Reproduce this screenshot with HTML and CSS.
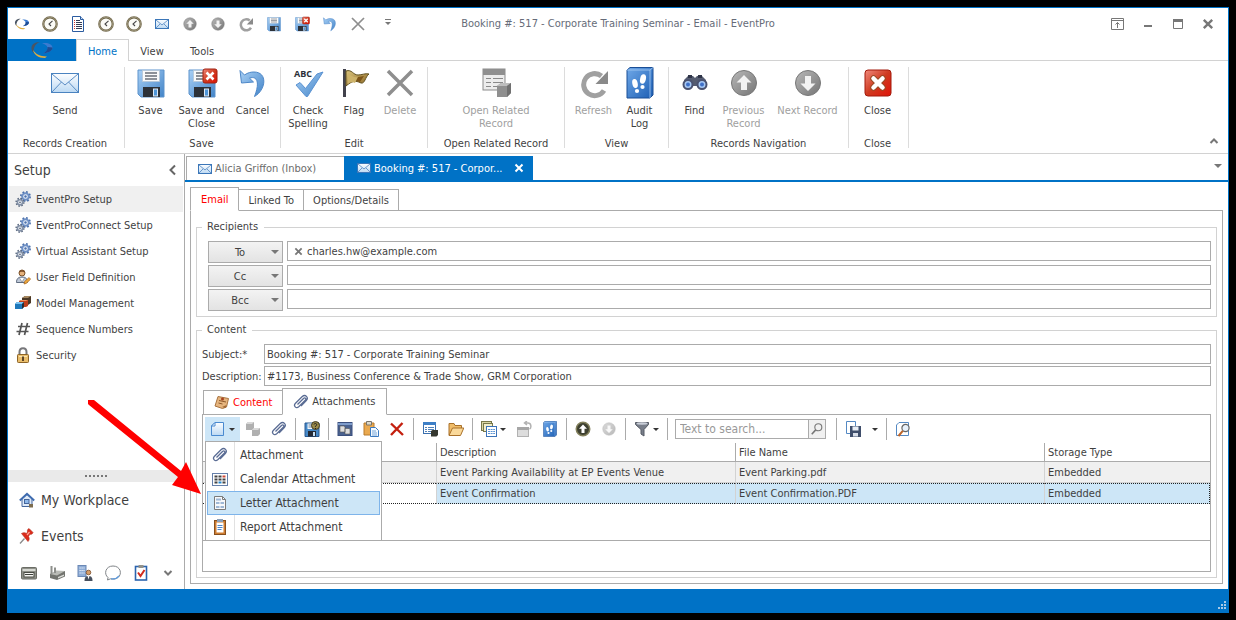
FILE: index.html
```html
<!DOCTYPE html>
<html lang="en">
<head>
    <meta charset="UTF-8">
    <title>Booking #: 517 - Corporate Training Seminar - Email - EventPro</title>
    <link rel="stylesheet" href="styles.css">
</head>
<body>
    <!-- shared icons -->
    <svg class="sprite" aria-hidden="true">
        <defs>
            <linearGradient id="gBlue" x1="0" y1="0" x2="1" y2="1"><stop offset="0" stop-color="#a9d0f5"/><stop offset="1" stop-color="#4284c8"/></linearGradient>
            <linearGradient id="gPale" x1="0" y1="0" x2="0" y2="1"><stop offset="0" stop-color="#fdfeff"/><stop offset="1" stop-color="#bcd9f3"/></linearGradient>
            <linearGradient id="gBook" x1="0" y1="0" x2="1" y2="1"><stop offset="0" stop-color="#6fa8e8"/><stop offset="1" stop-color="#1d5fb4"/></linearGradient>
            <linearGradient id="gGray" x1="0" y1="0" x2="1" y2="1"><stop offset="0" stop-color="#b8b8b8"/><stop offset="1" stop-color="#757575"/></linearGradient>
            <linearGradient id="gRed" x1="0" y1="0" x2="1" y2="1"><stop offset="0" stop-color="#f08a7c"/><stop offset=".5" stop-color="#cf3a20"/><stop offset="1" stop-color="#e01408"/></linearGradient>
            <linearGradient id="gGold" x1="0" y1="0" x2="1" y2="1"><stop offset="0" stop-color="#d9c47e"/><stop offset="1" stop-color="#8a6420"/></linearGradient>
        </defs>
        <symbol id="swirl" viewBox="0 0 24 18">
            <path d="M10 1C4 1 1 4 1.500 8c.3 1.600 1 3 2.300 4.200C3 7 5 3 10 1z" fill="#4a5563"/>
            <path d="M3 9c1 4.500 5 8 12 8l2-1.600C10 15.500 6 13.500 3 9z" fill="#dfae3f"/>
            <path d="M12 2.500c5-1.200 10 .5 10.500 4C22.800 10 18 12 13 12.500c3-1.500 5-3.500 4.500-6C17 4.500 15 3 12 2.500z" fill="#3c7bd0"/>
            <path d="M17.500 6l5 .5c.3 3.500-4.500 5.500-9.500 6 3-1.500 4.800-3.500 4.500-6.500z" fill="#1e4c94"/>
        </symbol>
        <symbol id="clock" viewBox="0 0 16 16">
            <circle cx="8" cy="8" r="6.700" fill="#fbfbf6" stroke="#6d6448" stroke-width="2.200"/>
            <circle cx="8" cy="8" r="6.800" fill="none" stroke="#b9b095" stroke-width=".6"/>
            <path d="M10.500 4.800L7 8l2 2" fill="none" stroke="#444" stroke-width="1.100"/>
        </symbol>
        <symbol id="doc" viewBox="0 0 16 16">
            <path d="M2.500.5h8l3 3v12h-11z" fill="#fff" stroke="#2b5ca0"/>
            <path d="M10.500.5v3h3" fill="#c8dcf4" stroke="#2b5ca0"/>
            <path d="M6 4.500h4M6 6.500h6M6 8.500h6M6 10.500h6M6 12.500h6" stroke="#333c55"/>
            <path d="M4 4.500h1M4 6.500h1M4 8.500h1M4 10.500h1M4 12.500h1" stroke="#c33"/>
        </symbol>
        <symbol id="mail" viewBox="0 0 16 16">
            <rect x="1.500" y="3.500" width="13" height="9" fill="url(#gPale)" stroke="#3b76b8"/>
            <path d="M2 4l6 5 6-5M2 12l4-4M14 12l-4-4" fill="none" stroke="#5e8fc6" stroke-width=".9"/>
        </symbol>
        <symbol id="mailBig" viewBox="0 0 32 32">
            <rect x="2.500" y="6.500" width="27" height="19" fill="url(#gPale)" stroke="#4a83c0"/>
            <path d="M3 7l13 11L29 7M3 25l9.500-10M29 25l-9.500-10" fill="none" stroke="#5b8dc4"/>
        </symbol>
        <symbol id="upGray" viewBox="0 0 32 32">
            <circle cx="16" cy="16" r="12.500" fill="url(#gGray)" stroke="#777"/>
            <path d="M16 8l7.500 7.500H19V23h-6v-7.500H8.500z" fill="#f2f2f2"/>
        </symbol>
        <symbol id="downGray" viewBox="0 0 32 32">
            <circle cx="16" cy="16" r="12.500" fill="url(#gGray)" stroke="#777"/>
            <path d="M16 24l7.500-7.500H19V9h-6v7.500H8.500z" fill="#f2f2f2"/>
        </symbol>
        <symbol id="upDark" viewBox="0 0 32 32">
            <circle cx="16" cy="16" r="13.500" fill="#3e4030" stroke="#83805c" stroke-width="3"/>
            <path d="M16 7l8 8.500h-5V24h-6v-8.500H8z" fill="#fff"/>
        </symbol>
        <symbol id="refresh" viewBox="0 0 32 32">
            <path d="M26 23.500A11 11 0 1 1 23.500 9" fill="none" stroke="#a0a0a0" stroke-width="5"/>
            <path d="M30 4v13H17.500z" fill="#8a8a8a"/>
        </symbol>
        <symbol id="save" viewBox="0 0 32 32">
            <path d="M3 3h26v27H6l-3-3z" fill="url(#gBlue)" stroke="#5c93cc"/>
            <rect x="7.500" y="3.500" width="17" height="11" fill="#fafafa" stroke="#b6c6d6" stroke-width=".8"/>
            <path d="M10 6h12M10 9h12M10 12h12" stroke="#6a6f78" stroke-width="1.300"/>
            <path d="M8 20h17v10H8z" fill="#2c3138"/>
            <rect x="18.500" y="22" width="4" height="7" fill="#4f96d8" stroke="#dbe9f7"/>
        </symbol>
        <symbol id="saveClose" viewBox="0 0 32 32">
            <use href="#save" width="32" height="32"/>
            <rect x="17" y="2" width="14" height="14" rx="2" fill="url(#gRed)" stroke="#a02010"/>
            <path d="M20.500 5.500l7 7m0-7l-7 7" stroke="#fff" stroke-width="2.600"/>
        </symbol>
        <symbol id="undo" viewBox="0 0 32 32">
            <path d="M3 3.500l1.500 12.500 12-1-4-3.800c7-2.700 11 3.300 5 18.300C29 23 31 5 17 5c-3 0-6 .5-9.500 3z" fill="url(#gBlue)" stroke="#4d87c8"/>
        </symbol>
        <symbol id="crossGray" viewBox="0 0 32 32">
            <path d="M4 4l24 24M28 4L4 28" fill="none" stroke="#8e8e8e" stroke-width="3.500"/>
        </symbol>
        <symbol id="crossRed" viewBox="0 0 16 16">
            <path d="M2 2.500l12 11.500M13.500 2L2 14" fill="none" stroke="#c4200f" stroke-width="2.400"/>
        </symbol>
        <symbol id="closeRed" viewBox="0 0 32 32">
            <rect x="3" y="3" width="26" height="26" rx="3" fill="url(#gRed)" stroke="#a31b0c"/>
            <path d="M11.500 11.500l9 9m0-9l-9 9" stroke="#9a4a24" stroke-width="6.500" stroke-linecap="round"/>
            <path d="M11.500 11.500l9 9m0-9l-9 9" stroke="#fff" stroke-width="4.500" stroke-linecap="round"/>
        </symbol>
        <symbol id="flag" viewBox="0 0 32 32">
            <path d="M5 2h3v28H5z" fill="#42424c"/>
            <path d="M8 4c6-2 7 4 12 4 4 0 7-2 11-1-4 3-4 10-8 9-6-3-9-2-15 3z" fill="url(#gGold)" stroke="#60501f"/>
            <path d="M10 6c3 3 7 5 10 4l-3 6c-2-1-5-1-7 1z" fill="#cdb36a"/>
            <path d="M20 10l6-1-4 6-4-1z" fill="#7c5418"/>
        </symbol>
        <symbol id="related" viewBox="0 0 32 32">
            <rect x="3" y="2" width="22" height="21" fill="#ececec" stroke="#8b8b8b"/>
            <path d="M3 2h22v6H3z" fill="#8f8f8f"/>
            <path d="M6 11.500h5M6 15.500h5M6 19.500h5M13 11.500h10M13 15.500h10M13 19.500h10" stroke="#898989"/>
            <path d="M17 19l4-3h10v10l-4 4H17z" fill="#8f8f8f"/>
            <path d="M17 19l4-3h10l-4 3z" fill="#bdbdbd"/><path d="M27 19l4-3v10l-4 4z" fill="#707070"/>
        </symbol>
        <symbol id="audit" viewBox="0 0 32 32">
            <path d="M3 3l3-2.500h23V28l-3 3H3z" fill="url(#gBook)" stroke="#1a4e96"/>
            <path d="M3 3h23v28M26 3l3-2.500" fill="none" stroke="#a9cdf4" stroke-width=".8"/>
            <ellipse cx="11" cy="16.500" rx="2.700" ry="4.500" transform="rotate(-12 11 16.500)" fill="#fff"/>
            <ellipse cx="19" cy="12" rx="2.900" ry="4.800" transform="rotate(12 19 12)" fill="#fff"/>
            <ellipse cx="13" cy="24" rx="2.100" ry="1.900" fill="#fff"/><ellipse cx="18.500" cy="20" rx="2.100" ry="1.900" fill="#fff"/>
        </symbol>
        <symbol id="find" viewBox="0 0 32 32">
            <path d="M5 13l4-4h5l2 2 2-2h5l4 4v6H5z" fill="#555c70"/>
            <path d="M9 8h4v3H9zM19 8h4v3h-4z" fill="#2f3447"/>
            <circle cx="9" cy="17.500" r="4.500" fill="#a6c8f4" stroke="#4a5270" stroke-width="2"/>
            <circle cx="23" cy="17.500" r="4.500" fill="#a6c8f4" stroke="#4a5270" stroke-width="2"/>
            <circle cx="9" cy="17.500" r="2" fill="#3f70c8"/><circle cx="23" cy="17.500" r="2" fill="#3f70c8"/>
        </symbol>
        <symbol id="gears" viewBox="0 0 16 16">
            <circle cx="10.500" cy="5.500" r="3.300" fill="#eef3fa" stroke="#6e90c6" stroke-width="2"/>
            <circle cx="10.500" cy="5.500" r="4.700" fill="none" stroke="#4d72ad" stroke-width="1.600" stroke-dasharray="1.800 1.890"/>
            <circle cx="5" cy="11.300" r="2.600" fill="#f4f6f9" stroke="#8492a8" stroke-width="1.600"/>
            <circle cx="5" cy="11.300" r="3.900" fill="none" stroke="#5c6a80" stroke-width="1.400" stroke-dasharray="1.500 1.560"/>
            <circle cx="10.500" cy="5.500" r="1.200" fill="#4d72ad"/><circle cx="5" cy="11.300" r=".9" fill="#5c6a80"/>
        </symbol>
        <symbol id="userField" viewBox="0 0 16 16">
            <circle cx="7" cy="4" r="3" fill="#e6b27c" stroke="#7a5128"/>
            <path d="M4 3.500C4 0 10 0 10 3.500 8 2.500 6 2.500 4 3.500z" fill="#80502a"/>
            <path d="M1.500 13.500c0-4 2-5.500 5.500-5.500s5.500 1.500 5.500 5.500z" fill="#bfc9d8" stroke="#606c80"/>
            <path d="M4.500 9l2.500 4 2.500-4" fill="#fff" stroke="#777" stroke-width=".6"/>
            <path d="M9 15l.6-2.500 4.500-4 1.500 1.700-4.400 4.200z" fill="#eda83c" stroke="#a3611c" stroke-width=".7"/>
        </symbol>
        <symbol id="model" viewBox="0 0 16 16">
            <path d="M7 3l3-2h6v7l-3 2H7z" fill="#4b3826"/><path d="M7 3l3-2h6l-3 2z" fill="#a4865e"/>
            <path d="M4 6l2-1h7v6l-2 1H4z" fill="#bf3f1d"/><path d="M4 6l2-1h7l-2 1z" fill="#ef9160"/>
            <path d="M0 9l2-2h7v5l-2 2H0z" fill="#1f78ba"/><path d="M0 9l2-2h7L7 9z" fill="#7cc2ee"/><path d="M7 9l2-2v5l-2 2z" fill="#292d35"/>
        </symbol>
        <symbol id="hash" viewBox="0 0 16 16">
            <path d="M7 2L4 14M12.500 2l-3 12M3 5.500h12M1.500 10.500h12" stroke="#555" stroke-width="1.700"/>
        </symbol>
        <symbol id="lock" viewBox="0 0 16 16">
            <path d="M4.500 8V5c0-5 7-5 7 0v3" fill="none" stroke="#77777a" stroke-width="2"/>
            <rect x="2.500" y="7.500" width="11" height="8" rx=".8" fill="#e9bd6b" stroke="#8d6427"/>
            <path d="M4 9h8v1H4z" fill="#fbe5ae"/><path d="M7 9.500h2V14H7z" fill="#5d4425"/>
        </symbol>
        <symbol id="home" viewBox="0 0 16 16">
            <path d="M3 7v7.500h10V7L8 2.500z" fill="#dfeaf8" stroke="#44659b"/>
            <path d="M.8 8.500L8 1.800l7.200 6.700" fill="none" stroke="#3f6cb0" stroke-width="1.900"/>
            <rect x="5.500" y="7.500" width="4.500" height="4" fill="#8eb8ea" stroke="#44659b"/>
            <path d="M10 12h4v3.500h-4z" fill="#7d6c4e"/>
        </symbol>
        <symbol id="pin" viewBox="0 0 16 16">
            <path d="M5.500 10.500L1 15.500" stroke="#8a8a8a" stroke-width="1.300"/>
            <path d="M2.500 5.500c2-1.200 3.500-1 5 0l1-1.500C8 2 9 1 10 .5l4 4c-.5 1.500-1.500 2-3.200 1.800L9.500 8.500c1 1.800 1 3.500-.5 5z" fill="#dc2c1c" stroke="#b02818" stroke-width=".6"/>
            <path d="M8 7l2.500-3" stroke="#ffa89a" stroke-width="1.200"/>
        </symbol>
        <symbol id="printer" viewBox="0 0 16 16">
            <rect x=".5" y="2.500" width="15" height="11.500" rx="1" fill="#8e9089" stroke="#6b6d66"/>
            <path d="M1.500 4h13v2h-13z" fill="#d6d8d2"/><rect x="3" y="7.500" width="10" height="4.500" fill="#f5f5f2" stroke="#4a4c45"/>
            <path d="M4 9.500h8" stroke="#3c403a"/>
        </symbol>
        <symbol id="factory" viewBox="0 0 16 16">
            <path d="M1 9l6-2.500 9-.5v5.500l-8 3.500L1 13z" fill="#72746f"/><path d="M1 9l6-3.500 9 .5-8 4.500z" fill="#b9bbb6"/>
            <path d="M1.500 1h2v8h-2zM5 2.500h2V8H5z" fill="#8e908c"/><path d="M9 12l6-2.500V11l-6 2.500z" fill="#dddeda"/>
        </symbol>
        <symbol id="building" viewBox="0 0 16 16">
            <rect x="1" y=".5" width="8" height="11" fill="#8fadd6" stroke="#6b88b5"/>
            <path d="M2.500 3h5M2.500 5.500h5M2.500 8h5" stroke="#f2f7ff" stroke-dasharray="1.200 .8"/>
            <circle cx="11.500" cy="7.500" r="2.300" fill="#d69c66" stroke="#7a4b28" stroke-width=".8"/>
            <path d="M7.500 16c0-4 1.500-5 4-5s4 1 4 5z" fill="#47505e"/><path d="M10.500 11h2l-1 3.500z" fill="#fff"/>
        </symbol>
        <symbol id="bubble" viewBox="0 0 16 16">
            <path d="M3 12.500C-1.500 9 .5 1 8 1s9.500 8 5 11.500c-2 1.500-5 2-7.500 1.300L2.500 15z" fill="#fff" stroke="#808488"/>
            <path d="M6 13.800c3 .5 6-.3 8-3" fill="none" stroke="#5e99da" stroke-width="1.300"/>
        </symbol>
        <symbol id="task" viewBox="0 0 16 16">
            <rect x="2.500" y="1.500" width="11" height="13.500" fill="#fff" stroke="#2b64ae" stroke-width="1.600"/>
            <path d="M5.500 0h5v3h-5z" fill="#92918a"/><path d="M5 7.500l2.500 3.500L11.500 5" fill="none" stroke="#d22c1e" stroke-width="2"/>
        </symbol>
        <symbol id="note" viewBox="0 0 16 16">
            <path d="M4 1.500l10.500 2L12.500 12l-4 1.500L1 11z" fill="#e6b57e" stroke="#a97440"/>
            <path d="M5 5.500l7 1.500M4.500 8l4 1" stroke="#8d5a2c"/><path d="M8 12l4.500-2-1 3z" fill="#a06a35"/><circle cx="8.500" cy="4" r="1.500" fill="#a8431f"/>
        </symbol>
        <symbol id="clip" viewBox="0 0 16 16">
            <path d="M4.500 10.500l6-6c1.500-1.500 3.300.3 1.800 1.800L6 12.500c-3 2.600-6-.6-3.500-3.300L9 2.700c3.500-3 7 .8 4.300 3.800L8 12" fill="none" stroke="#5a6c94" stroke-width="1.300"/>
        </symbol>
        <symbol id="newDoc" viewBox="0 0 16 16">
            <path d="M5 1.500h8.500v13h-12V5z" fill="url(#gPale)" stroke="#4a8ad0"/><path d="M5 1.500V5H1.500z" fill="#fff" stroke="#4a8ad0"/>
        </symbol>
        <symbol id="cubes" viewBox="0 0 16 16">
            <path d="M1 3l2-2h6v6L7 9H1z" fill="#b0b0b0"/><path d="M1 3l2-2h6L7 3z" fill="#d8d8d8"/>
            <path d="M7 9l2-2h6v6l-2 2H7z" fill="#b0b0b0"/><path d="M7 9l2-2h6l-2 2z" fill="#d8d8d8"/>
        </symbol>
        <symbol id="saveAsk" viewBox="0 0 16 16">
            <path d="M1 2h14v13.500H1z" fill="#4689c8" stroke="#285890"/><path d="M3.500 2.500h6V8h-6z" fill="#f4f8fc"/><path d="M4.500 4h4M4.500 6h4" stroke="#6681a3"/>
            <path d="M4 10h8v5.500H4z" fill="#252a35"/><path d="M9 11h2v4H9z" fill="#c7e0f5"/>
            <circle cx="11.500" cy="4.500" r="4" fill="#9a8a48" stroke="#443e26"/><path d="M10 3.500c.5-2 3.500-1 2.500.7l-1 1V6M11.500 7v1" fill="none" stroke="#222"/>
        </symbol>
        <symbol id="copy" viewBox="0 0 16 16">
            <rect x="1" y="1.500" width="14" height="13" fill="#4a628f" stroke="#3a4f7e"/><path d="M1 2h14v2H1z" fill="#7e9ccb"/>
            <path d="M3 5h4l1 1v5H3zM8 7.500h4l1 1V13H8z" fill="#dedede" stroke="#555" stroke-width=".6"/>
        </symbol>
        <symbol id="paste" viewBox="0 0 16 16">
            <path d="M1 2h10v12H1z" fill="#eaa94f" stroke="#b87a2c"/><path d="M3.500.5h5V4h-5z" fill="#dcd9cc" stroke="#7a756a"/>
            <path d="M7.500 6.500h5l3 3v6h-8z" fill="#f4faff" stroke="#3b7ac0"/><path d="M9 10h4M9 12h5M9 14h5" stroke="#79a7d9"/>
        </symbol>
        <symbol id="tableRec" viewBox="0 0 16 16">
            <rect x="1.500" y="1.500" width="12" height="11" fill="#fff" stroke="#3a6fae"/><path d="M1 1h13v3H1z" fill="#3d7fc6"/>
            <path d="M3 6.500h2M6 6.500h6M3 8.500h2M6 8.500h6M3 10.500h2M6 10.500h4" stroke="#5182b9"/><path d="M9 10l1.500-1H16v5l-1.500 1.500H9z" fill="#35372f"/>
        </symbol>
        <symbol id="folder" viewBox="0 0 16 16">
            <path d="M1 14V2.500h5l1 2h6.500V7" fill="#f0bd69" stroke="#a9712a"/><path d="M1 14.500L4.500 7h11.300l-3.300 7.500z" fill="#fad99a" stroke="#a9712a"/>
        </symbol>
        <symbol id="tables" viewBox="0 0 16 16">
            <rect x=".5" y=".5" width="10" height="9" fill="#d9d6a4" stroke="#77774a"/>
            <rect x="2.500" y="2.500" width="9" height="8" fill="#f1edca" stroke="#77774a"/>
            <rect x="5.500" y="5.500" width="10" height="10" fill="#fff" stroke="#3b72b7"/><path d="M7 8.500h7M7 10.500h7M7 12.500h7" stroke="#5b94d4" stroke-dasharray="2 .6"/>
        </symbol>
        <symbol id="unlock" viewBox="0 0 16 16">
            <rect x="1.500" y="6.500" width="11" height="9" fill="#ddd" stroke="#b2b2b2"/><path d="M1 6h12v3H1z" fill="#a6a6a6"/><path d="M9 2h3c3.500 0 3.500 5 1.500 6M11 0L8.500 2 11 4" fill="none" stroke="#b2b2b2" stroke-width="1.500"/>
        </symbol>
        <symbol id="funnel" viewBox="0 0 16 16">
            <path d="M1.500 1.500h13v2L10 8.500v6.500l-3-2V8.500l-5.500-5z" fill="#787e8a" stroke="#555a64"/><ellipse cx="8" cy="2.500" rx="5.500" ry="1.200" fill="#c9ced8"/>
        </symbol>
        <symbol id="lens" viewBox="0 0 16 16">
            <circle cx="9.500" cy="6" r="4" fill="none" stroke="#777" stroke-width="1.300"/><path d="M6.500 9L2 14" stroke="#777" stroke-width="1.800"/>
        </symbol>
        <symbol id="exportDoc" viewBox="0 0 16 16">
            <path d="M1.500.5h9v12h-9z" fill="#fff" stroke="#5489c3"/><path d="M5 5h11v11H5z" fill="#3f4e6b"/><path d="M7.500 5.500h6v4h-6z" fill="#e9eef5"/><path d="M8 12h5v3.500H8z" fill="#d9dfea"/>
        </symbol>
        <symbol id="preview" viewBox="0 0 16 16">
            <path d="M4 1.500h9.500v13h-12V4z" fill="#fff" stroke="#5489c3"/><circle cx="10.500" cy="7" r="3.600" fill="#e7f1fb" stroke="#666" stroke-width="1.200"/><path d="M7.800 9.800L3.500 15" stroke="#bd652a" stroke-width="2"/>
        </symbol>
        <symbol id="calendar" viewBox="0 0 16 16">
            <rect x=".5" y="2.500" width="15" height="12" fill="#fff" stroke="#6680aa"/>
            <path d="M2.500 5.500h7M2.500 8.500h11M2.500 11.500h3M10.500 11.500h3" stroke="#444" stroke-width="2" stroke-dasharray="3 1"/><path d="M10.500 5.500h3" stroke="#cf4836" stroke-width="2"/><path d="M6.500 11.500h3" stroke="#2387cc" stroke-width="2"/>
        </symbol>
        <symbol id="letter" viewBox="0 0 16 16">
            <path d="M2.500 1.500h8l3 3v10h-11z" fill="#f7f9fb" stroke="#7a7a7a"/><path d="M10.500 1.500v3h3" fill="none" stroke="#7a7a7a"/>
            <path d="M4 4.500h5M4 8h3.500M8.500 8H12M4 12h3.500M8.500 12H12" stroke="#9fb8d6" stroke-width="2"/>
        </symbol>
        <symbol id="report" viewBox="0 0 16 16">
            <rect x="2.500" y="1.500" width="11" height="14" fill="#cf7d30" stroke="#87501e"/><path d="M4.500 3.500h7v10h-7z" fill="#fff"/><path d="M5 0h6v3H5z" fill="#8ba0b8"/>
            <path d="M5.500 6.500h5M5.500 8.500h5M5.500 10.500h4" stroke="#4d86ca"/>
        </symbol>
        <symbol id="x" viewBox="0 0 10 10"><path d="M1.500 1.500l7 7m0-7l-7 7" stroke="currentColor" stroke-width="2"/></symbol>
        <symbol id="up" viewBox="0 0 10 10"><path d="M1.500 7L5 3.500 8.500 7" fill="none" stroke="currentColor" stroke-width="2"/></symbol>
        <symbol id="down" viewBox="0 0 10 10"><path d="M1.500 3L5 6.500 8.500 3" fill="none" stroke="currentColor" stroke-width="2"/></symbol>
        <symbol id="left" viewBox="0 0 10 12"><path d="M8 1.500L3.500 6 8 10.500" fill="none" stroke="currentColor" stroke-width="2"/></symbol>
    </svg>

    <div class="window">
        <header class="titlebar">
            <div class="quick">
                <button title="EventPro"><svg><use href="#swirl"/></svg></button>
                <button title="Recent"><svg><use href="#clock"/></svg></button>
                <button title="Document"><svg><use href="#doc"/></svg></button>
                <button title="Reminders"><svg><use href="#clock"/></svg></button>
                <button title="History"><svg><use href="#clock"/></svg></button>
                <button title="Send"><svg><use href="#mail"/></svg></button>
                <button title="Previous Record"><svg><use href="#upGray"/></svg></button>
                <button title="Next Record"><svg><use href="#downGray"/></svg></button>
                <button title="Refresh"><svg><use href="#refresh"/></svg></button>
                <button title="Save"><svg><use href="#save"/></svg></button>
                <button title="Save and Close"><svg><use href="#saveClose"/></svg></button>
                <button title="Cancel"><svg><use href="#undo"/></svg></button>
                <button title="Delete"><svg><use href="#crossGray"/></svg></button>
                <button class="customize" title="Customize"><span class="caret"></span></button>
            </div>
            <div class="title">Booking #: 517 - Corporate Training Seminar - Email - EventPro</div>
            <div class="controls">
                <button title="Ribbon Display"><svg width="14" height="12"><path d="M.5.5h12v11H.5zM1 2.500h11M6.500 10V4.500M4.500 6.500l2-2 2 2" fill="none" stroke="#777"/></svg></button>
                <button title="Minimize"><svg width="10" height="12"><path d="M1 8h8" stroke="#777" stroke-width="2"/></svg></button>
                <button title="Maximize"><svg width="10" height="10"><path d="M.5.5h9v9H.5z" fill="none" stroke="#777"/><path d="M0 1.500h10" stroke="#777" stroke-width="3"/></svg></button>
                <button title="Close Window"><svg width="12" height="12"><use href="#x"/></svg></button>
            </div>
        </header>

        <nav class="ribbon-tabs">
            <button class="app-button" title="EventPro"><svg width="24" height="18"><use href="#swirl"/></svg></button>
            <button class="ribbon-tab active">Home</button>
            <button class="ribbon-tab">View</button>
            <button class="ribbon-tab">Tools</button>
        </nav>

        <div class="ribbon">
            <section class="group g-send">
                <div class="actions">
                    <button class="w46"><svg><use href="#mailBig"/></svg>Send</button>
                </div>
                <h2>Records Creation</h2>
            </section>
            <section class="group g-save">
                <div class="actions">
                    <button class="w46"><svg><use href="#save"/></svg>Save</button>
                    <button class="w56"><svg><use href="#saveClose"/></svg>Save and<br>Close</button>
                    <button class="w46"><svg><use href="#undo"/></svg>Cancel</button>
                </div>
                <h2>Save</h2>
            </section>
            <section class="group g-edit">
                <div class="actions">
                    <button class="w46">
                        <svg viewBox="0 0 32 32">
                            <text class="abc" x="2" y="10">ABC</text>
                            <path d="M4 18l4-2.500 5.500 6L25 7l6-2-15.500 24.500H14z" fill="url(#gBlue)" stroke="#5a92d2"/>
                        </svg>Check<br>Spelling
                    </button>
                    <button class="w46"><svg><use href="#flag"/></svg>Flag</button>
                    <button class="w46" disabled><svg><use href="#crossGray"/></svg>Delete</button>
                </div>
                <h2>Edit</h2>
            </section>
            <section class="group g-related">
                <div class="actions">
                    <button class="w76" disabled><svg><use href="#related"/></svg>Open Related<br>Record</button>
                </div>
                <h2>Open Related Record</h2>
            </section>
            <section class="group g-view">
                <div class="actions">
                    <button class="w46" disabled><svg><use href="#refresh"/></svg>Refresh</button>
                    <button class="w46"><svg><use href="#audit"/></svg>Audit<br>Log</button>
                </div>
                <h2>View</h2>
            </section>
            <section class="group g-nav">
                <div class="actions">
                    <button class="w46"><svg><use href="#find"/></svg>Find</button>
                    <button class="w52" disabled><svg><use href="#upGray"/></svg>Previous<br>Record</button>
                    <button class="w76" disabled><svg><use href="#downGray"/></svg>Next Record</button>
                </div>
                <h2>Records Navigation</h2>
            </section>
            <section class="group g-close">
                <div class="actions">
                    <button class="w46"><svg><use href="#closeRed"/></svg>Close</button>
                </div>
                <h2>Close</h2>
            </section>
            <button class="collapse" title="Collapse Ribbon"><svg width="10" height="10"><use href="#up"/></svg></button>
        </div>

        <div class="body">
            <aside class="sidebar">
                <div class="side-title"><h1>Setup</h1><button title="Collapse"><svg width="10" height="12"><use href="#left"/></svg></button></div>
                <nav class="side-list">
                    <a href="#" class="selected"><svg><use href="#gears"/></svg>EventPro Setup</a>
                    <a href="#"><svg><use href="#gears"/></svg>EventProConnect Setup</a>
                    <a href="#"><svg><use href="#gears"/></svg>Virtual Assistant Setup</a>
                    <a href="#"><svg><use href="#userField"/></svg>User Field Definition</a>
                    <a href="#"><svg><use href="#model"/></svg>Model Management</a>
                    <a href="#"><svg><use href="#hash"/></svg>Sequence Numbers</a>
                    <a href="#"><svg><use href="#lock"/></svg>Security</a>
                </nav>
                <div class="splitter"><i></i><i></i><i></i><i></i><i></i><i></i></div>
                <nav class="side-groups">
                    <a href="#"><svg><use href="#home"/></svg>My Workplace</a>
                    <a href="#"><svg><use href="#pin"/></svg>Events</a>
                </nav>
                <div class="side-icons">
                    <button title="Printing"><svg><use href="#printer"/></svg></button>
                    <button title="Resources"><svg><use href="#factory"/></svg></button>
                    <button title="Accounts"><svg><use href="#building"/></svg></button>
                    <button title="Messages"><svg><use href="#bubble"/></svg></button>
                    <button title="Tasks"><svg><use href="#task"/></svg></button>
                    <button class="more" title="More"><svg><use href="#down"/></svg></button>
                </div>
            </aside>

            <main class="main">
                <div class="doc-tabs">
                    <button class="doc-tab"><svg><use href="#mail"/></svg><span>Alicia Griffon (Inbox)</span></button>
                    <div class="doc-tab active"><svg><use href="#mail"/></svg><span>Booking #: 517 - Corpor...</span><button class="close-tab" title="Close Tab"><svg><use href="#x"/></svg></button></div>
                    <button class="doc-menu" title="Open Tabs"><span class="caret"></span></button>
                </div>

                <div class="page">
                    <div class="tabs">
                        <button class="tab active red">Email</button>
                        <button class="tab">Linked To</button>
                        <button class="tab">Options/Details</button>
                    </div>
                    <div class="panel">
                        <fieldset class="recipients">
                            <legend>Recipients</legend>
                            <div class="recipient">
                                <button class="pick"><span>To</span><span class="caret"></span></button>
                                <div class="box"><button title="Remove"><svg><use href="#x"/></svg></button><input type="text" aria-label="To" value="charles.hw@example.com"></div>
                            </div>
                            <div class="recipient">
                                <button class="pick"><span>Cc</span><span class="caret"></span></button>
                                <div class="box"><input type="text" aria-label="Cc"></div>
                            </div>
                            <div class="recipient">
                                <button class="pick"><span>Bcc</span><span class="caret"></span></button>
                                <div class="box"><input type="text" aria-label="Bcc"></div>
                            </div>
                        </fieldset>

                        <fieldset class="content">
                            <legend>Content</legend>
                            <div class="fields">
                                <label for="subject">Subject:*</label>
                                <input id="subject" type="text" value="Booking #: 517 - Corporate Training Seminar">
                                <label for="description">Description:</label>
                                <input id="description" type="text" value="#1173, Business Conference &amp; Trade Show, GRM Corporation">
                            </div>
                            <div class="tabs inner">
                                <button class="tab red"><svg><use href="#note"/></svg>Content</button>
                                <button class="tab active"><svg><use href="#clip"/></svg>Attachments</button>
                            </div>
                            <div class="attachments">
                                <div class="toolbar">
                                    <div class="new">
                                        <button class="open" title="New"><svg><use href="#newDoc"/></svg><span class="caret dark"></span></button>
                                        <div class="menu">
                                            <button><svg><use href="#clip"/></svg>Attachment</button>
                                            <button><svg><use href="#calendar"/></svg>Calendar Attachment</button>
                                            <button class="hover"><svg><use href="#letter"/></svg>Letter Attachment</button>
                                            <button><svg><use href="#report"/></svg>Report Attachment</button>
                                        </div>
                                    </div>
                                    <button title="Clone"><svg><use href="#cubes"/></svg></button>
                                    <button title="Attach"><svg><use href="#clip"/></svg></button>
                                    <span class="sep"></span>
                                    <button title="Save As"><svg><use href="#saveAsk"/></svg></button>
                                    <span class="sep"></span>
                                    <button title="Copy"><svg><use href="#copy"/></svg></button>
                                    <button title="Paste"><svg><use href="#paste"/></svg></button>
                                    <button title="Delete"><svg><use href="#crossRed"/></svg></button>
                                    <span class="sep"></span>
                                    <button title="Open Record"><svg><use href="#tableRec"/></svg></button>
                                    <button title="Open File"><svg><use href="#folder"/></svg></button>
                                    <span class="sep"></span>
                                    <button class="drop" title="Related"><svg><use href="#tables"/></svg><span class="caret dark"></span></button>
                                    <button title="Reset"><svg><use href="#unlock"/></svg></button>
                                    <button title="Audit Log"><svg><use href="#audit"/></svg></button>
                                    <span class="sep"></span>
                                    <button title="Up"><svg><use href="#upDark"/></svg></button>
                                    <button title="Down"><svg class="faded"><use href="#downGray"/></svg></button>
                                    <span class="sep"></span>
                                    <button class="drop" title="Filter"><svg><use href="#funnel"/></svg><span class="caret dark"></span></button>
                                    <span class="sep"></span>
                                    <div class="search"><input type="text" aria-label="Search" placeholder="Text to search..."><button title="Search"><svg><use href="#lens"/></svg></button></div>
                                    <span class="sep wide"></span>
                                    <button class="drop far" title="Export"><svg><use href="#exportDoc"/></svg><span class="caret dark"></span></button>
                                    <span class="sep"></span>
                                    <button title="Preview"><svg><use href="#preview"/></svg></button>
                                </div>
                                <table>
                                    <colgroup><col class="c-name"><col class="c-desc"><col class="c-file"><col></colgroup>
                                    <thead>
                                        <tr><th></th><th>Description</th><th>File Name</th><th>Storage Type</th></tr>
                                    </thead>
                                    <tbody>
                                        <tr><td></td><td>Event Parking Availability at EP Events Venue</td><td>Event Parking.pdf</td><td>Embedded</td></tr>
                                        <tr class="current"><td></td><td>Event Confirmation</td><td>Event Confirmation.PDF</td><td>Embedded</td></tr>
                                    </tbody>
                                </table>
                                <div class="grid-footer"></div>
                            </div>
                        </fieldset>
                    </div>
                </div>
            </main>
        </div>

        <footer class="status">
            <svg width="9" height="9"><path d="M6 0h2v2H6zM3 3h2v2H3zM6 3h2v2H6zM0 6h2v2H0zM3 6h2v2H3zM6 6h2v2H6z" fill="#a9c9e6"/></svg>
        </footer>
    </div>

    <svg class="pointer" width="120" height="100" aria-hidden="true">
        <path d="M2 4V0h6L95 71l5-9 15 32-29-9 6-8L3 5z" fill="#f00"/>
    </svg>
</body>
</html>
```

FILE: styles.css
```css
* {
    box-sizing: border-box;
}

body {
    margin: 0;
    padding: 7px;
    height: 100vh;
    background: #000;
    color: #3f3f3f;
    font: 11px/13px "DejaVu Sans Condensed", "Noto Sans", sans-serif;
}

button, input {
    font: inherit;
    color: inherit;
    margin: 0;
    padding: 0;
    border: none;
    background: none;
}

button {
    flex: none;
}

a {
    color: inherit;
    text-decoration: none;
}

svg {
    display: block;
    flex: none;
}

h1, h2 {
    margin: 0;
    font-weight: normal;
}

.sprite {
    position: absolute;
    width: 0;
    height: 0;
}

.caret {
    border: 4px solid transparent;
    border-top-color: #777;
    border-bottom: none;
}

.caret.dark {
    border-width: 3px;
    border-bottom: none;
    border-top-color: #333;
}

.window {
    display: flex;
    flex-direction: column;
    height: 100%;
    border: 1px solid #0072c6;
    background: #fff;
}

/* title bar */
.titlebar {
    display: grid;
    grid-template-columns: 1fr auto 1fr;
    height: 31px;
    align-items: center;
}

.quick {
    display: flex;
}

.quick button {
    width: 28px;
    height: 24px;
    display: flex;
    align-items: center;
    justify-content: center;
}

.quick svg {
    width: 16px;
    height: 16px;
}

.quick .customize {
    width: 32px;
}

.customize .caret {
    border-width: 3px;
    border-bottom: none;
    position: relative;
}

.customize .caret::before {
    content: "";
    position: absolute;
    left: -3px;
    top: -6px;
    width: 6px;
    height: 1px;
    background: #777;
}

.title {
    color: #666b78;
}

.controls {
    display: flex;
    justify-content: flex-end;
    padding-right: 5px;
    color: #777;
}

.controls button {
    width: 30px;
    height: 24px;
    display: flex;
    align-items: center;
    justify-content: center;
}

/* ribbon */
.ribbon-tabs {
    display: flex;
    height: 22px;
    border-bottom: 1px solid #d2d2d2;
}

.app-button {
    width: 68px;
    height: 22px;
    background: #0072c6;
    display: flex;
    justify-content: center;
    align-items: center;
}

.ribbon-tab {
    width: 50px;
    height: 22px;
    padding: 2px 4px 0 0;
}

.ribbon-tab.active {
    width: 53px;
    padding-right: 0;
    color: #0072c6;
    background: #fff;
    border: 1px solid #d2d2d2;
    border-bottom: none;
}

.ribbon {
    display: flex;
    height: 93px;
    border-bottom: 1px solid #d2d2d2;
    padding: 6px 0;
}

.group {
    display: flex;
    flex-direction: column;
    height: 81px;
    border-right: 1px solid #dcdcdc;
}

.group h2 {
    font-size: 11px;
    line-height: 8px;
    text-align: center;
    margin-top: auto;
}

.g-send, .g-save, .g-close {
    padding-right: 2px;
}

.g-send { width: 117px; }
.g-save { width: 156px; }
.g-edit { width: 147px; }
.g-related { width: 137px; }
.g-view { width: 104px; }
.g-nav { width: 180px; }
.g-close { width: 60px; }

.actions {
    display: flex;
    justify-content: center;
    align-items: flex-start;
}

.actions button {
    white-space: nowrap;
}

.actions svg {
    width: 32px;
    height: 32px;
    margin: 0 auto 5px;
}

.actions button:disabled {
    color: #a0a0a0;
}

.abc {
    font: bold 9px "Open Sans", sans-serif;
    fill: #2c3038;
}

.w46 { width: 46px; }
.w52 { width: 52px; }
.w56 { width: 56px; }
.w76 { width: 76px; }

.collapse {
    margin: auto 9px 1px auto;
    color: #777;
}

.body {
    display: flex;
    flex: 1;
    min-height: 0;
}

/* sidebar */
.sidebar {
    display: flex;
    flex-direction: column;
    width: 177px;
    flex: none;
    border-right: 1px solid #ababab;
}

.side-title {
    display: flex;
    justify-content: space-between;
    align-items: center;
    height: 32px;
    padding: 0 7px 0 6px;
    color: #666;
}

.side-title h1 {
    font-size: 14px;
    color: #3f3f3f;
}

.side-list {
    flex: 1;
    padding: 0 1px;
}

.side-list a {
    display: flex;
    align-items: center;
    gap: 5px;
    height: 26px;
    padding-left: 6px;
}

.side-list svg, .side-groups svg, .side-icons svg {
    width: 16px;
    height: 16px;
}

.side-list .selected {
    background: #f0f0f0;
}

.splitter {
    display: flex;
    justify-content: center;
    align-items: center;
    gap: 2px;
    height: 12px;
    background: #eaeaea;
}

.splitter i {
    width: 2px;
    height: 2px;
    background: #777;
}

.side-groups a {
    display: flex;
    align-items: center;
    gap: 6px;
    height: 36px;
    padding-left: 11px;
    font-size: 14px;
}

.side-icons {
    display: flex;
    align-items: center;
    gap: 12px;
    height: 35px;
    padding: 2px 0 0 13px;
    color: #777;
}

.side-icons .more {
    padding-left: 2px;
}

.side-icons .more svg {
    width: 10px;
    height: 10px;
}

/* document area */
.main {
    display: flex;
    flex-direction: column;
    flex: 1;
    min-width: 0;
}

.doc-tabs {
    display: flex;
    height: 28px;
    padding: 2px 0 0 1px;
    border-bottom: 2px solid #0072c6;
}

.doc-tab {
    display: flex;
    align-items: center;
    gap: 2px;
    width: 158px;
    padding-left: 10px;
    color: #6b6b6b;
    border: 1px solid #ababab;
    border-width: 1px 0 0 1px;
}

.doc-tab.active {
    width: 189px;
    padding-left: 12px;
    color: #fff;
    background: #0072c6;
    border: none;
}

.doc-tab > svg {
    width: 16px;
    height: 16px;
}

.close-tab {
    margin: 0 9px 0 auto;
}

.close-tab svg {
    width: 10px;
    height: 10px;
}

.doc-menu {
    margin: 0 6px 5px auto;
    display: flex;
    align-items: center;
}

.page {
    display: flex;
    flex-direction: column;
    flex: 1;
    padding: 5px;
    min-height: 0;
}

.tabs {
    display: flex;
    align-items: flex-end;
    height: 24px;
    margin-bottom: -1px;
    flex: none;
}

.tab {
    display: flex;
    align-items: center;
    justify-content: center;
    gap: 3px;
    height: 22px;
    padding: 0 9px;
    margin-right: -1px;
    background: #fff;
    border: 1px solid #ababab;
}

.tab.active {
    height: 24px;
    padding: 0 10px;
    border-bottom-color: #fff;
    position: relative;
}

.tab svg {
    width: 16px;
    height: 16px;
}

.red {
    color: #f00;
}

.tabs.inner {
    height: 27px;
    margin: 2px 0 -1px 1px;
}

.inner .tab {
    height: 25px;
    padding: 0 10px;
}

.inner .tab.active {
    height: 27px;
}

.panel {
    display: flex;
    flex-direction: column;
    flex: 1;
    min-height: 0;
    border: 1px solid #ababab;
    padding: 9px 5px 5px;
}

fieldset {
    margin: 0;
    min-width: 0;
    border: 1px solid #d2d2d2;
}

legend {
    height: 14px;
    padding: 0 6px 0 5px;
}

.recipients {
    padding: 7px 5px 5px 11px;
    margin-bottom: 6px;
}

.recipients legend {
    margin-left: -6px;
}

.recipient {
    display: flex;
    align-items: flex-start;
    gap: 4px;
}

.recipient + .recipient {
    margin-top: 2px;
}

.pick {
    display: flex;
    align-items: center;
    width: 75px;
    height: 22px;
    padding-right: 3px;
    border: 1px solid #ababab;
    background: linear-gradient(#f3f3f3, #e3e3e3);
}

.pick span:first-child {
    flex: 1;
}

.box {
    display: flex;
    align-items: center;
    flex: 1;
    height: 20px;
    border: 1px solid #ababab;
}

.box button {
    margin-left: 6px;
    color: #777;
}

.box svg {
    width: 9px;
    height: 9px;
}

.box input {
    flex: 1;
    padding: 0 4px;
}

.content {
    display: flex;
    flex-direction: column;
    flex: 1;
    min-height: 0;
    padding: 7px 5px 5px;
}

.fields {
    display: grid;
    grid-template-columns: 62px 1fr;
    row-gap: 2px;
    align-items: center;
}

.fields label {
    white-space: nowrap;
}

.fields input {
    height: 20px;
    padding: 0 2px;
    border: 1px solid #ababab;
}

.attachments {
    display: flex;
    flex-direction: column;
    flex: 1;
    min-height: 0;
    border: 1px solid #ababab;
}

/* attachment toolbar */
.toolbar {
    display: flex;
    align-items: center;
    height: 28px;
    padding-left: 2px;
    flex: none;
}

.toolbar > button, .open {
    display: flex;
    align-items: center;
    justify-content: center;
    gap: 3px;
    width: 26px;
    height: 24px;
}

.toolbar svg {
    width: 16px;
    height: 16px;
}

.toolbar .open {
    width: 35px;
    background: #cde6f7;
}

.toolbar .drop {
    width: 35px;
}

.toolbar .far {
    width: 44px;
    gap: 11px;
}

.faded {
    opacity: 0.5;
}

.sep {
    width: 1px;
    height: 22px;
    margin: 0 3px;
    background: #ababab;
}

.sep.wide {
    margin: 0 2px 0 10px;
}

.search {
    display: flex;
    width: 151px;
    height: 20px;
    margin-left: 4px;
    border: 1px solid #ababab;
}

.search input {
    flex: 1;
    min-width: 0;
    padding-left: 4px;
    font-size: 12px;
}

.search input::placeholder {
    color: #999;
}

.search button {
    width: 17px;
    padding-left: 1px;
    border-left: 1px solid #ababab;
    background: #f0f0f0;
}

.search svg {
    width: 14px;
    height: 14px;
}

.new {
    position: relative;
}

.menu {
    position: absolute;
    z-index: 2;
    top: 24px;
    left: 0;
    width: 177px;
    padding: 1px;
    border: 1px solid #ababab;
    background: linear-gradient(90deg, #fff 28px, #e1e1e1 28px, #e1e1e1 29px, #fff 29px);
    font-size: 12px;
}

.menu button {
    display: flex;
    align-items: center;
    gap: 12px;
    width: 100%;
    height: 24px;
    padding-left: 4px;
    border: 1px solid transparent;
}

.menu .hover {
    background: #cde6f7;
    border-color: #7eb4ea;
}

/* attachment list */
table {
    width: 100%;
    table-layout: fixed;
    border-collapse: separate;
    border-spacing: 0;
}

.c-name { width: 233px; }
.c-desc { width: 299px; }
.c-file { width: 309px; }

th, td {
    padding: 0 3px;
    text-align: left;
    font-weight: normal;
    white-space: nowrap;
}

th {
    height: 19px;
    border-bottom: 1px solid #ababab;
}

th + th {
    border-left: 1px solid #ababab;
}

td {
    height: 21px;
    background: #f0f0f0;
    border-bottom: 1px solid #d2d2d2;
}

td + td {
    border-left: 1px solid #d2d2d2;
}

.current td {
    background: #cde6f7;
    border-top: 1px dotted #222;
    border-bottom: 1px dotted #222;
}

.current td:first-child {
    background: #fff;
}

.current td:last-child {
    border-right: 1px dotted #222;
}

.grid-footer {
    height: 31px;
    margin-top: auto;
    border-top: 1px solid #ababab;
}

.status {
    display: flex;
    justify-content: flex-end;
    align-items: flex-end;
    height: 23px;
    padding: 0 1px 2px;
    background: #0072c6;
}

/* callout arrow over the menu */
.pointer {
    position: absolute;
    z-index: 3;
    left: 86px;
    top: 400px;
}
```
